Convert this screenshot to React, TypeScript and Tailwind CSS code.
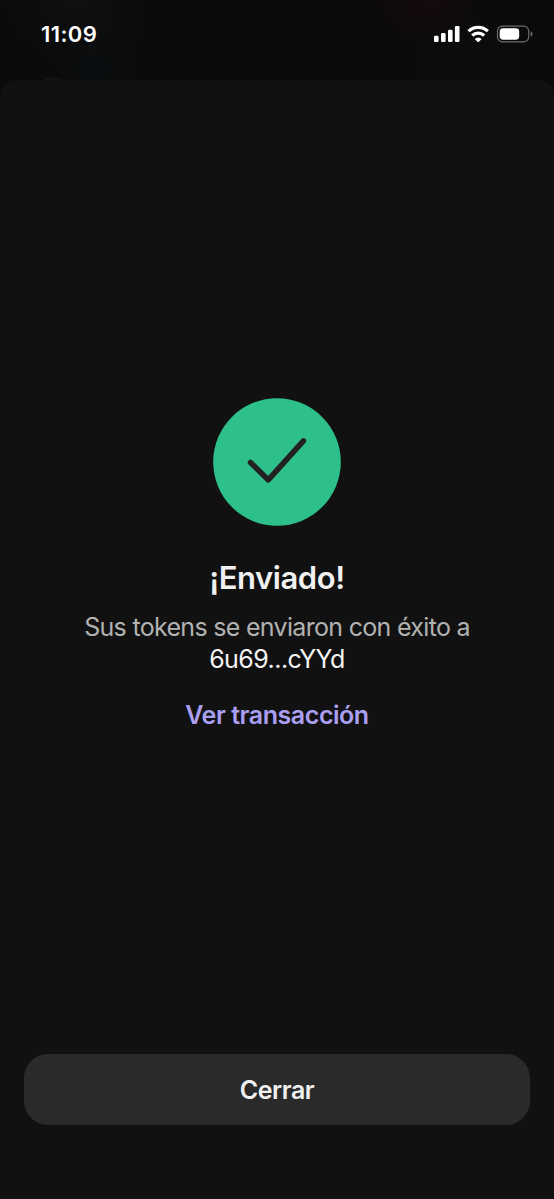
function StatusIcons() {
  return (
    <svg width="100" height="20" viewBox="434 24 100 20" fill="none" aria-hidden="true">
      <g fill="#fff">
        <rect x="434" y="35.8" width="4.6" height="6.2" rx="1.3" />
        <rect x="441" y="33" width="4.6" height="9" rx="1.3" />
        <rect x="448" y="29.8" width="4.6" height="12.2" rx="1.3" />
        <rect x="454.9" y="26" width="4.6" height="16" rx="1.3" />
        <path d="M474.7 39Q478.2 35.9 481.7 39L478.9 41.8Q478.2 42.4 477.5 41.8Z" />
      </g>
      <path d="M468.5 31.2C474 26 482.4 26 487.9 31.2" stroke="#fff" strokeWidth="3.2" />
      <path d="M472.2 35.5C475.6 32.3 480.8 32.3 484.2 35.5" stroke="#fff" strokeWidth="3.1" />
      <rect x="497.5" y="26.1" width="31.2" height="15.8" rx="5" stroke="#6d6d70" strokeWidth="1.2" />
      <rect x="499.7" y="28.3" width="19.5" height="11.4" rx="3.4" fill="#fff" />
      <path d="M530.6 31.3Q532.6 32 532.6 34T530.6 36.7Z" fill="#6d6d70" />
    </svg>
  );
}

function SuccessBadge() {
  return (
    <svg width="128" height="128" viewBox="0 0 128 128" fill="none" aria-hidden="true">
      <circle cx="64" cy="64" r="63.8" fill="#2ec08b" />
      <path d="M37.5 64.5L55.3 81.9L90.4 42.9" stroke="#222" strokeWidth="5.6" strokeLinecap="round" strokeLinejoin="round" />
    </svg>
  );
}

export default function App() {
  return (
    <div className="relative flex h-[1199px] w-[554px] flex-col overflow-hidden bg-[#0a0a0b] font-['Inter','Liberation_Sans',sans-serif]">
      <div className="absolute left-[34px] top-[77px] size-10 rounded-full bg-[#161616]" />
      <header className="relative flex h-20 shrink-0 items-start justify-between bg-[radial-gradient(ellipse_90px_70px_at_75px_0px,#110f10,transparent),radial-gradient(ellipse_60px_50px_at_425px_0px,#150a0b,transparent),radial-gradient(ellipse_80px_70px_at_470px_65px,#0b0d0f,transparent),radial-gradient(ellipse_60px_70px_at_95px_65px,#0a0d0f,transparent)] pl-[41px] pr-5 pt-6">
        <time className="text-[22px] leading-5 font-semibold tracking-[0.4px] text-white">11:09</time>
        <StatusIcons />
      </header>
      <main className="relative flex flex-1 flex-col rounded-t-[16px] bg-[#111] px-6 pb-[74px]">
        <section className="flex flex-1 flex-col items-center pt-[318px] text-center">
          <SuccessBadge />
          <h1 className="mt-8 text-[31px] leading-10 font-semibold tracking-[-0.45px] text-[#f0f0f0]">¡Enviado!</h1>
          <p className="mt-[13px] text-[25px] leading-8 tracking-[-0.69px] text-[#b2b2b2]">
            <span className="block whitespace-nowrap">Sus tokens se enviaron con éxito a</span>
            <span className="block tracking-[-0.55px] text-[#f4f4f4]">6u69...cYYd</span>
          </p>
          <a href="#" className="mt-6 text-[25px] leading-8 font-semibold tracking-[-0.45px] text-[#ab9ff2]">Ver transacción</a>
        </section>
        <button type="button" className="h-[71px] w-full rounded-[24px] bg-[#2a2a2a] pt-0.5 text-[25px] font-semibold tracking-[-0.5px] text-[#f0f0f0]">
          Cerrar
        </button>
      </main>
    </div>
  );
}
